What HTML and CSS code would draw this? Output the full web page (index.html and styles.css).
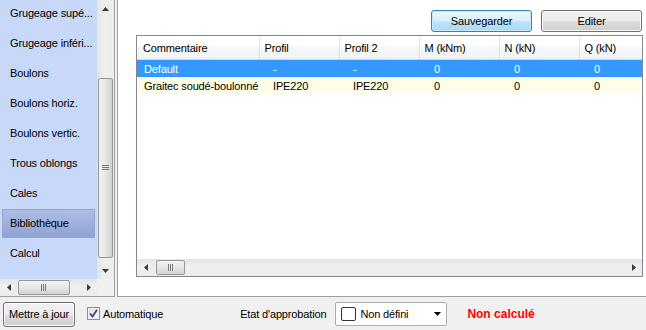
FILE: index.html
```html
<!DOCTYPE html>
<html lang="fr">
<head>
    <meta charset="UTF-8">
    <title>Bibliothèque</title>
    <link rel="stylesheet" href="styles.css">
</head>
<body>

    <div class="window">
        <div class="top">
            <!-- menu de gauche -->
            <div class="side">
                <div class="side-body">
                    <ul class="nav">
                        <li>Grugeage supé...</li>
                        <li>Grugeage inféri...</li>
                        <li>Boulons</li>
                        <li>Boulons horiz.</li>
                        <li>Boulons vertic.</li>
                        <li>Trous oblongs</li>
                        <li>Cales</li>
                        <li class="selected">Bibliothèque</li>
                        <li>Calcul</li>
                    </ul>
                    <div class="vscroll">
                        <div class="sb-btn">
                            <svg width="7" height="4" viewBox="0 0 7 4"><polygon points="0,4 3.5,0 7,4" fill="#3c3c3c"/></svg>
                        </div>
                        <div class="vtrack">
                            <div class="vthumb">
                                <svg width="7" height="6" viewBox="0 0 7 6"><path d="M0 0.5h7M0 2.5h7M0 4.5h7" stroke="#7a7a7a" stroke-width="1"/></svg>
                            </div>
                        </div>
                        <div class="sb-btn">
                            <svg width="7" height="4" viewBox="0 0 7 4"><polygon points="0,0 7,0 3.5,4" fill="#3c3c3c"/></svg>
                        </div>
                    </div>
                </div>
                <div class="side-foot">
                    <div class="hscroll side-hscroll">
                        <div class="hs-btn">
                            <svg width="4" height="7" viewBox="0 0 4 7"><polygon points="4,0 4,7 0,3.5" fill="#3c3c3c"/></svg>
                        </div>
                        <div class="htrack">
                            <div class="hthumb wide">
                                <svg width="6" height="7" viewBox="0 0 6 7"><path d="M0.5 0v7M2.5 0v7M4.5 0v7" stroke="#7a7a7a" stroke-width="1"/></svg>
                            </div>
                        </div>
                        <div class="hs-btn">
                            <svg width="4" height="7" viewBox="0 0 4 7"><polygon points="0,0 4,3.5 0,7" fill="#3c3c3c"/></svg>
                        </div>
                    </div>
                    <div class="corner"></div>
                </div>
            </div>

            <!-- zone principale -->
            <div class="main">
                <div class="toolbar">
                    <button type="button" class="btn btn-focus">Sauvegarder</button>
                    <button type="button" class="btn">Editer</button>
                </div>

                <div class="grid">
                    <div class="grid-body">
                        <table>
                            <colgroup>
                                <col style="width:122px">
                                <col style="width:80px">
                                <col style="width:80px">
                                <col style="width:80px">
                                <col style="width:80px">
                                <col style="width:63px">
                            </colgroup>
                            <thead>
                                <tr>
                                    <th>Commentaire</th>
                                    <th>Profil</th>
                                    <th>Profil 2</th>
                                    <th>M (kNm)</th>
                                    <th>N (kN)</th>
                                    <th class="last">Q (kN)</th>
                                </tr>
                            </thead>
                            <tbody>
                                <tr class="row-selected">
                                    <td>Default</td>
                                    <td class="txt">-</td>
                                    <td class="txt">-</td>
                                    <td class="num">0</td>
                                    <td class="num">0</td>
                                    <td class="num">0</td>
                                </tr>
                                <tr class="row-alt">
                                    <td>Graitec soudé-boulonné</td>
                                    <td class="txt">IPE220</td>
                                    <td class="txt">IPE220</td>
                                    <td class="num">0</td>
                                    <td class="num">0</td>
                                    <td class="num">0</td>
                                </tr>
                            </tbody>
                        </table>
                    </div>
                    <div class="hscroll grid-hscroll">
                        <div class="hs-btn">
                            <svg width="4" height="7" viewBox="0 0 4 7"><polygon points="4,0 4,7 0,3.5" fill="#3c3c3c"/></svg>
                        </div>
                        <div class="htrack">
                            <div class="hthumb">
                                <svg width="6" height="7" viewBox="0 0 6 7"><path d="M0.5 0v7M2.5 0v7M4.5 0v7" stroke="#7a7a7a" stroke-width="1"/></svg>
                            </div>
                        </div>
                        <div class="hs-btn">
                            <svg width="4" height="7" viewBox="0 0 4 7"><polygon points="0,0 4,3.5 0,7" fill="#3c3c3c"/></svg>
                        </div>
                    </div>
                </div>
            </div>
        </div>

        <!-- barre du bas -->
        <div class="statusbar">
            <button type="button" class="btn btn-update">Mettre à jour</button>
            <label class="check">
                <span class="check-box">
                    <svg width="9" height="9" viewBox="0 0 9 9"><path d="M1 4.5 L3.5 7.5 L8 0.8" fill="none" stroke="#2a4c8f" stroke-width="1.8"/></svg>
                </span>
                Automatique
            </label>
            <span class="approval-label">Etat d'approbation</span>
            <div class="select">
                <span class="select-swatch"></span>
                <span class="select-text">Non défini</span>
                <svg class="select-arrow" width="7" height="4" viewBox="0 0 7 4"><polygon points="0,0 7,0 3.5,4" fill="#000"/></svg>
            </div>
            <span class="status-red">Non calculé</span>
        </div>
    </div>

</body>
</html>
```

FILE: styles.css
```css
body {
    margin: 0;
    font-family: "Liberation Sans", Arial, sans-serif;
    font-size: 11px;
    letter-spacing: -0.15px;
    color: #000;
    background-color: #f0f0f0;
}

.window {
    width: 646px;
    height: 330px;
    overflow: hidden;
}

.top {
    display: flex;
    height: 297px;
}

/* menu de gauche */

.side {
    width: 114px;
    height: 296px;
    border-right: 1px solid #a0a0a0;
    border-bottom: 1px solid #a0a0a0;
    background-color: #f0f0f0;
    display: flex;
    flex-direction: column;
}

.side-body {
    display: flex;
    height: 279px;
}

.nav {
    list-style: none;
    margin: 0;
    padding: 0;
    width: 97px;
    background-color: #c8d8f9;
    overflow: hidden;
}

.nav li {
    height: 29px;
    line-height: 29px;
    margin: 0 2px 1px 2px;
    padding-left: 8px;
    white-space: nowrap;
    box-sizing: border-box;
}

.nav li:first-child {
    margin-top: -1px;
}

.nav li.selected {
    background: linear-gradient(#aebde4, #8fa3d3);
    border: 1px solid #97a7d2;
    line-height: 27px;
    padding-left: 7px;
}

.vscroll {
    width: 17px;
    display: flex;
    flex-direction: column;
    background: linear-gradient(to right, #e3e3e3, #efefef 40%, #ececec);
}

.sb-btn {
    height: 17px;
    display: flex;
    align-items: center;
    justify-content: center;
}

.vtrack {
    flex: 1;
    padding: 61px 1px 3px 1px;
}

.vthumb {
    height: 178px;
    border: 1px solid #979797;
    border-radius: 2px;
    background: linear-gradient(to right, #f4f4f4, #e6e6e6 50%, #d2d2d2);
    display: flex;
    align-items: center;
    justify-content: center;
}

.side-foot {
    display: flex;
    height: 17px;
}

.hscroll {
    display: flex;
    height: 17px;
    background: linear-gradient(#e3e3e3, #efefef 40%, #ececec);
}

.side-hscroll {
    width: 97px;
}

.corner {
    flex: 1;
    background-color: #f0f0f0;
}

.hs-btn {
    width: 17px;
    display: flex;
    align-items: center;
    justify-content: center;
}

.htrack {
    flex: 1;
    padding: 1px 0 1px 1px;
}

.hthumb {
    width: 29px;
    height: 100%;
    box-sizing: border-box;
    border: 1px solid #979797;
    border-radius: 2px;
    background: linear-gradient(#f4f4f4, #e6e6e6 50%, #d2d2d2);
    display: flex;
    align-items: center;
    justify-content: center;
}

.hthumb.wide {
    width: 52px;
}

/* zone principale */

.main {
    flex: 1;
    margin-left: 2px;
    border-left: 1px solid #a0a0a0;
    border-bottom: 1px solid #a0a0a0;
    background-color: #fff;
    padding: 10px 3px 0 18px;
}

.toolbar {
    display: flex;
    justify-content: flex-end;
    gap: 9px;
    margin-right: 1px;
    margin-bottom: 3px;
}

.btn {
    font-family: "Liberation Sans", Arial, sans-serif;
    font-size: 11px;
    letter-spacing: -0.15px;
    color: #000;
    width: 101px;
    height: 22px;
    padding: 0;
    border: 1px solid #707070;
    border-radius: 3px;
    background: linear-gradient(#f2f2f2, #ebebeb 50%, #dddddd 51%, #cfcfcf);
    box-shadow: inset 0 0 0 1px #fcfcfc;
}

.btn-focus {
    border-color: #3c7fb1;
    background: linear-gradient(#eaf6fd, #d9f0fc 50%, #bee6fd 51%, #a7d9f5);
    box-shadow: inset 0 0 0 1px #cbeafb;
}

.grid {
    width: 505px;
    height: 240px;
    border: 1px solid #828790;
    display: flex;
    flex-direction: column;
}

.grid-body {
    flex: 1;
    overflow: hidden;
}

table {
    border-collapse: collapse;
    table-layout: fixed;
    width: 505px;
}

th {
    height: 23px;
    padding: 0 0 0 5px;
    text-align: left;
    font-weight: normal;
    white-space: nowrap;
    background: linear-gradient(#ffffff, #ffffff 45%, #f6f7f8 46%, #f2f3f5);
    border-right: 1px solid #e3e4e6;
    border-bottom: 1px solid #d5d5d5;
}

th:first-child {
    padding-left: 6px;
}

th.last {
    border-right: none;
}

td {
    height: 17px;
    padding: 0;
    white-space: nowrap;
}

td:first-child {
    padding-left: 7px;
}

td.txt {
    padding-left: 14px;
}

td.num {
    padding-left: 15px;
}

.row-selected td {
    background-color: #3399ff;
    color: #fff;
}

.row-alt td {
    background-color: #fdfde9;
}

.grid-hscroll {
    height: 17px;
}

.grid-hscroll .htrack {
    padding-left: 2px;
}

/* barre du bas */

.statusbar {
    display: flex;
    align-items: center;
    height: 33px;
    padding-left: 3px;
}

.btn-update {
    width: 72px;
    height: 25px;
    margin-top: 1px;
}

.check {
    display: flex;
    align-items: center;
    margin-left: 12px;
    gap: 3px;
}

.check-box {
    width: 11px;
    height: 11px;
    border: 1px solid #8e8f8f;
    background: linear-gradient(135deg, #dcdcdc, #fbfbfb);
    box-shadow: inset 0 0 0 1px #f4f4f4;
    display: flex;
    align-items: center;
    justify-content: center;
}

.approval-label {
    margin-left: 77px;
}

.select {
    display: flex;
    align-items: center;
    width: 110px;
    height: 22px;
    margin-left: 9px;
    margin-top: 1px;
    border: 1px solid #abadb3;
    border-radius: 2px;
    background-color: #fff;
}

.select-swatch {
    width: 13px;
    height: 12px;
    margin-left: 5px;
    border: 1px solid #333;
    border-radius: 2px;
}

.select-text {
    margin-left: 4px;
    flex: 1;
}

.select-arrow {
    margin-right: 5px;
}

.status-red {
    margin-left: 20px;
    color: #ff0000;
    font-weight: bold;
    font-size: 12px;
    letter-spacing: 0;
}
```
